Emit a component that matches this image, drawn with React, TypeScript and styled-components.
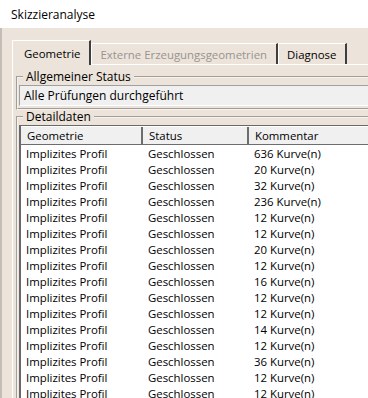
import React from "react";
import styled, { createGlobalStyle, css } from "styled-components";

const GlobalStyle = createGlobalStyle`
  html, body {
    margin: 0;
    padding: 0;
    background: #ffffff;
  }
  body {
    font-family: "Open Sans", "Noto Sans", sans-serif;
    font-size: 11.4px;
    color: #000000;
  }
`;

// One row of the detail list.
interface DetailRow {
  geometry: string;
  status: string;
  comment: string;
}

const curveCounts = [636, 20, 32, 236, 12, 12, 20, 12, 16, 12, 12, 14, 12, 36, 12, 12];

const rows: DetailRow[] = curveCounts.map((count) => ({
  geometry: "Implizites Profil",
  status: "Geschlossen",
  comment: `${count} Kurve(n)`,
}));

const Window = styled.div`
  width: 368px;
  height: 398px;
  overflow: hidden;
  display: flex;
  flex-direction: column;
`;

const TitleBar = styled.div`
  height: 28px;
  flex: 0 0 28px;
  display: flex;
  align-items: center;
  padding-left: 11px;
  font-size: 12px;
  background: #ffffff;
`;

const Body = styled.div`
  flex: 1;
  display: flex;
  flex-direction: column;
  padding: 11px 0 0 10px;
  background: #ece4da;
  border-left: 2px solid #c4bdb5;
`;

const TabStrip = styled.div`
  display: flex;
  align-items: flex-end;
  height: 25px;
  width: 420px;
`;

const Tab = styled.div<{ $active?: boolean; $disabled?: boolean }>`
  display: flex;
  align-items: center;
  height: 21px;
  padding: 0 9px 0 8px;
  background: #ece4da;
  border-top: 1px solid #ffffff;
  border-left: 1px solid #ffffff;
  border-right: 2px solid #3e3e3e;
  box-sizing: border-box;
  color: ${({ $disabled }) => ($disabled ? "#979391" : "#000000")};
  position: relative;
  ${({ $active }) =>
    $active &&
    css`
      height: 25px;
      padding: 0 9px 0 11px;
      margin-bottom: -1px;
      z-index: 1;
    `}
`;

const TabPanel = styled.div`
  flex: 1;
  width: 420px;
  border-top: 1px solid #ffffff;
  border-left: 1px solid #ffffff;
  padding: 5px 0 0 3px;
  display: flex;
  flex-direction: column;
`;

const Group = styled.fieldset<{ $grow?: boolean }>`
  margin: 0;
  padding: 1px 0 2px 1px;
  border: 2px groove #f6f1ec;
  border-right: none;
  min-width: 0;
  ${({ $grow }) =>
    $grow &&
    css`
      flex: 1;
      border-bottom: none;
    `}
`;

const Legend = styled.legend`
  padding: 0 3px;
  margin-left: 4px;
  line-height: 14px;
  font-size: 12px;
`;

const StatusField = styled.div`
  height: 19px;
  display: flex;
  align-items: center;
  padding-left: 4px;
  font-size: 12px;
  background: #f0f0f0;
  border-top: 1px solid #a0a0a0;
  border-bottom: 1px solid #ffffff;
  border-left: 1px solid #a0a0a0;
`;

const ListView = styled.div`
  background: #ffffff;
  border-top: 1px solid #696969;
  border-left: 2px solid #696969;
  height: 100%;
`;

const Columns = css`
  display: grid;
  grid-template-columns: 122px 106px 1fr;
`;

const HeaderRow = styled.div`
  ${Columns};
  height: 19px;
  background: #f0f0f0;
  border-top: 1px solid #ffffff;
  border-bottom: 1px solid #6d6d6d;
  box-sizing: border-box;
`;

const HeaderCell = styled.div`
  display: flex;
  align-items: center;
  padding-left: 6px;
  border-right: 2px solid #6d6d6d;
`;

const Row = styled.div`
  ${Columns};
  height: 16px;
`;

const Cell = styled.div`
  display: flex;
  align-items: center;
  padding-left: 5px;
  white-space: nowrap;
`;

export default function App() {
  return (
    <>
      <GlobalStyle />
      <Window>
        <TitleBar>Skizzieranalyse</TitleBar>
        <Body>
          <TabStrip>
            <Tab $active>Geometrie</Tab>
            <Tab $disabled>Externe Erzeugungsgeometrien</Tab>
            <Tab>Diagnose</Tab>
          </TabStrip>
          <TabPanel>
            <Group>
              <Legend>Allgemeiner Status</Legend>
              <StatusField>Alle Prüfungen durchgeführt</StatusField>
            </Group>
            <Group $grow>
              <Legend>Detaildaten</Legend>
              <ListView>
                <HeaderRow>
                  <HeaderCell>Geometrie</HeaderCell>
                  <HeaderCell>Status</HeaderCell>
                  <HeaderCell>Kommentar</HeaderCell>
                </HeaderRow>
                {rows.map((row, index) => (
                  <Row key={index}>
                    <Cell>{row.geometry}</Cell>
                    <Cell>{row.status}</Cell>
                    <Cell>{row.comment}</Cell>
                  </Row>
                ))}
              </ListView>
            </Group>
          </TabPanel>
        </Body>
      </Window>
    </>
  );
}
